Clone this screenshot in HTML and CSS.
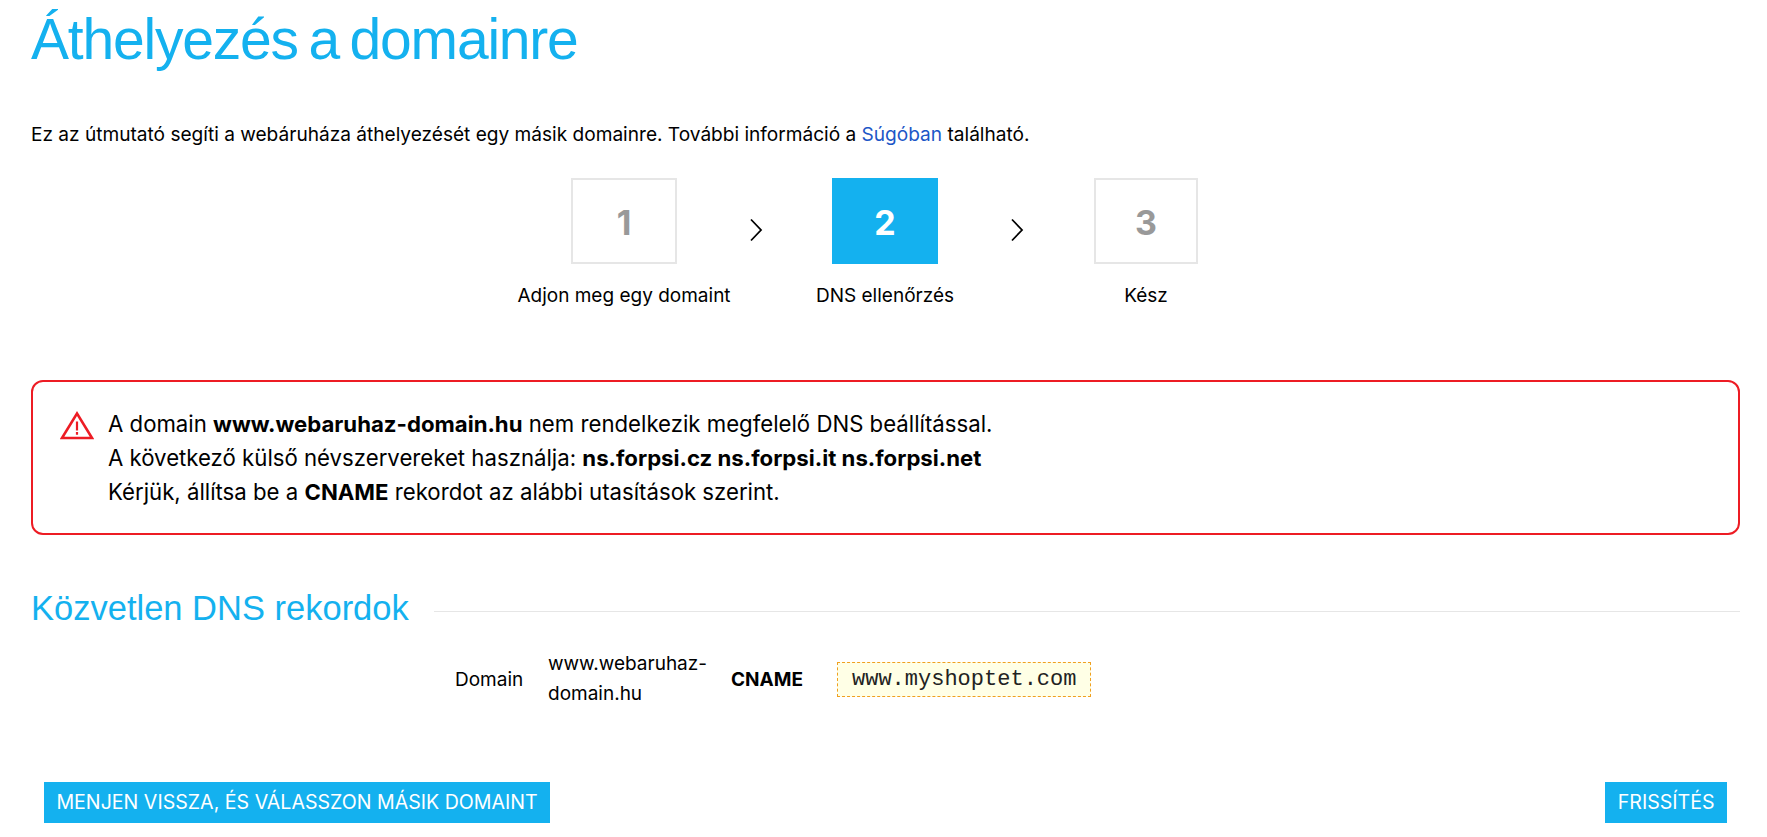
FILE: index.html
```html
<!DOCTYPE html>
<html lang="hu">
<head>
<meta charset="utf-8">
<title>Áthelyezés a domainre</title>
<link rel="stylesheet" href="styles.css">
</head>
<body>
<main class="page">
  <h1 class="title">Áthelyezés a domainre</h1>
  <p class="intro">Ez az útmutató segíti a webáruháza áthelyezését egy másik domainre. További információ a <a href="#" class="link">Súgóban</a> található.</p>
  <ol class="steps">
    <li class="step">
      <span class="step-box">1</span>
      <span class="step-label">Adjon meg egy domaint</span>
    </li>
    <li class="arrow"><svg width="14" height="24" viewBox="0 0 14 24"><path d="M2 1.5l10 10.5L2 22.5" fill="none" stroke="#000" stroke-width="1.8"/></svg></li>
    <li class="step">
      <span class="step-box active">2</span>
      <span class="step-label">DNS ellenőrzés</span>
    </li>
    <li class="arrow"><svg width="14" height="24" viewBox="0 0 14 24"><path d="M2 1.5l10 10.5L2 22.5" fill="none" stroke="#000" stroke-width="1.8"/></svg></li>
    <li class="step">
      <span class="step-box step-box-narrow">3</span>
      <span class="step-label">Kész</span>
    </li>
  </ol>
  <section class="alert">
    <svg class="alert-icon" width="34" height="29" viewBox="0 0 34 29"><path d="M17 2.5L2 27h30z" fill="none" stroke="#ed1c24" stroke-width="2.5"/><path d="M17 10.5v9M17 21v2.8" fill="none" stroke="#ed1c24" stroke-width="2.2"/></svg>
    <div class="alert-text">
      A domain <b>www.webaruhaz-domain.hu</b> nem rendelkezik megfelelő DNS beállítással.<br>
      A következő külső névszervereket használja: <b>ns.forpsi.cz ns.forpsi.it ns.forpsi.net</b><br>
      Kérjük, állítsa be a <b>CNAME</b> rekordot az alábbi utasítások szerint.
    </div>
  </section>
  <div class="section-head">
    <h2 class="section-title">Közvetlen DNS rekordok</h2>
    <span class="section-line"></span>
  </div>
  <div class="record">
    <span class="rec-type">Domain</span>
    <span class="rec-name">www.webaruhaz-domain.hu</span>
    <b class="rec-kind">CNAME</b>
    <code class="rec-value">www.myshoptet.com</code>
  </div>
  <div class="actions">
    <a href="#" class="btn">MENJEN VISSZA, ÉS VÁLASSZON MÁSIK DOMAINT</a>
    <a href="#" class="btn">FRISSÍTÉS</a>
  </div>
</main>
</body>
</html>
```
FILE: styles.css
```css
* { box-sizing: border-box; }
html, body { margin: 0; padding: 0; background: #fff; }
body { font-family: Inter, "Liberation Sans", sans-serif; color: #000; font-size: 19px; height: 837px; overflow: hidden; }
.page { padding: 0 27px 0 31px; }
.title { margin: 0; padding-top: 5px; font-family: "Liberation Sans", sans-serif; font-size: 57px; line-height: 68px; font-weight: 400; color: #14b1ef; letter-spacing: -1.2px; word-spacing: -4px; }
.intro { margin: 50px 0 0; font-size: 19.08px; line-height: 24px; }
.link { color: #1c56c7; text-decoration: none; }
.steps { list-style: none; margin: 31px 0 0; padding: 0 1px 0 0; display: flex; justify-content: center; align-items: flex-start; }
.step { width: 190px; display: flex; flex-direction: column; align-items: center; }
.step-box { width: 106px; height: 86px; border: 2px solid #e6e6e6; padding-top: 3px; display: flex; align-items: center; justify-content: center; font-size: 34px; font-weight: 700; color: #999; }
.step-box.active { background: #14b1ef; border-color: #14b1ef; color: #fff; }
.step-box-narrow { width: 104px; }
.step-label { margin-top: 20px; font-size: 19px; line-height: 24px; white-space: nowrap; }
.arrow { width: 71px; padding: 40px 0 0 2px; display: flex; justify-content: center; }
.alert { margin-top: 72px; height: 155px; border: 2px solid #ed1c24; border-radius: 12px; padding: 25px 27px; display: flex; gap: 14px; }
.alert-icon { margin-top: 4px; flex: none; }
.alert-text { font-size: 22.2px; line-height: 34px; }
.section-head { display: flex; align-items: center; gap: 25px; margin-top: 53px; }
.section-title { margin: 0; font-family: "Liberation Sans", sans-serif; font-size: 34.5px; line-height: 40px; font-weight: 400; color: #14b1ef; white-space: nowrap; }
.section-line { flex: 1; height: 1px; background: #e6e6e6; margin-top: 6px; }
.record { display: flex; align-items: center; margin: 21px 0 0 424px; }
.rec-type { width: 93px; }
.rec-name { width: 183px; line-height: 30px; }
.rec-kind { width: 106px; }
.rec-value { font-family: "Liberation Mono", monospace; font-size: 22px; line-height: 25px; color: #222; background: #ffffe6; border: 1px dashed #f0a020; padding: 4px 14px; }
.actions { display: flex; justify-content: space-between; margin: 73px 13px 0; }
.btn { background: #14b1ef; color: #fff; text-decoration: none; font-size: 19.6px; line-height: 41px; padding: 0 12.4px; }
```
